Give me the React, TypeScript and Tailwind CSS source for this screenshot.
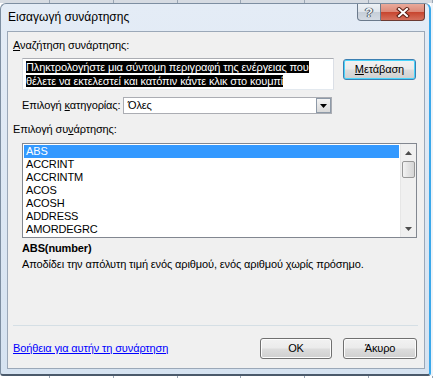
import React from 'react';

const FUNCS = ['ABS', 'ACCRINT', 'ACCRINTM', 'ACOS', 'ACOSH', 'ADDRESS', 'AMORDEGRC'];

function SheetStrip({ className = '' }: { className?: string }) {
  // the worksheet grid peeking out behind the dialog
  return (
    <div className={`flex shrink-0 ${className}`}>
      <div className="w-[50px] border-r border-[#9aa6b4]" />
      {[0, 1, 2, 3, 4, 5].map((i) => (
        <div key={i} className="w-[64px] border-r border-[#9aa6b4]" />
      ))}
    </div>
  );
}

function WinButton({
  children,
  focused = false,
  className = '',
}: {
  children: React.ReactNode;
  focused?: boolean;
  className?: string;
}) {
  return (
    <div
      className={`h-[21px] rounded-[3px] border flex items-center justify-center bg-[linear-gradient(#f2f2f2_0%,#ebebeb_48%,#dddddd_52%,#cfcfcf_100%)] ${
        focused
          ? 'border-[#3c7fb1] shadow-[inset_0_0_0_1px_#48d4fb]'
          : 'border-[#707070] shadow-[inset_0_0_0_1px_#fcfcfc]'
      } ${className}`}
    >
      {children}
    </div>
  );
}

export default function App() {
  return (
    <div className="w-[433px] h-[378px] overflow-hidden bg-white flex flex-col font-['Liberation_Sans',Arial,sans-serif] text-[11px] leading-[13px] text-black">
      <SheetStrip className="h-[3px] bg-[#d6dbe2]" />

      <div className="flex shrink-0">
        {/* Window frame */}
        <div className="w-[431px] h-[373px] flex flex-col rounded-t-[6px] rounded-b-[3px] border-l border-t border-[#7d8ea1] border-r-2 border-r-[#3aa8ea] border-b-2 border-b-[#4b5a6b] bg-[linear-gradient(#e4ecf6,#d6e3f1)]">
          {/* Title bar */}
          <div className="h-[27px] flex items-start shrink-0">
            <div className="pl-[7px] pt-[6px] text-[12px] leading-[15px] text-black">Εισαγωγή συνάρτησης</div>
            <div className="ml-auto mr-[4px] flex">
              <div className="w-[24px] h-[17px] rounded-bl-[4px] border border-t-0 border-[#6b7a8c] bg-[linear-gradient(#eef2f6_0%,#dfe5ec_48%,#c6ced8_52%,#d3dae3_100%)] flex items-center justify-center">
                <span className="text-[13px] leading-[13px] font-bold text-[#f4f6f8] [text-shadow:0_0_1px_#3d4a58,0_0_1px_#3d4a58,1px_0_0_#55606c,-1px_0_0_#55606c]">?</span>
              </div>
              <div className="w-[44px] h-[17px] rounded-br-[4px] border border-l-0 border-t-0 border-[#6b3a33] bg-[linear-gradient(#e9a99b_0%,#dd8a79_48%,#c7452f_52%,#d5705c_100%)] flex items-center justify-center">
                <svg width="14" height="11" viewBox="0 0 14 11">
                  <path d="M3 2 L11 9 M11 2 L3 9" stroke="#5a1e14" strokeWidth="4" strokeLinecap="square" />
                  <path d="M3 2 L11 9 M11 2 L3 9" stroke="#ffffff" strokeWidth="2" strokeLinecap="square" />
                </svg>
              </div>
            </div>
          </div>

          {/* Client area */}
          <div className="ml-[6px] mr-[4px] h-[338px] border border-[#9ba8b8] bg-[#f0f0f0] pl-[5px] pr-[6px] flex flex-col shrink-0 tracking-[-0.12px]">
            <div className="mt-[7px]">
              <span className="underline">Α</span>ναζήτηση συνάρτησης:
            </div>

            <div className="mt-[6px] ml-[9px] flex items-start">
              <div className="w-[312px] h-[32px] border border-[#abadb3] border-l-[#dbdfe6] border-r-[#dbdfe6] border-b-[#e3e9ef] bg-white pl-[3px] pt-[1px] leading-[14px]">
                <span className="bg-black text-white">Πληκτρολογήστε μια σύντομη περιγραφή της ενέργειας που</span>
                <br />
                <span className="bg-black text-white">θέλετε να εκτελεστεί και κατόπιν κάντε κλικ στο κουμπί</span>
              </div>
              <WinButton focused className="ml-[9px] mt-[1px] w-[73px]">
                <span>
                  <span className="underline">Μ</span>ετάβαση
                </span>
              </WinButton>
            </div>

            <div className="mt-[7px] ml-[9px] flex items-center">
              <div className="w-[101px]">
                Επιλογή <span className="underline">κ</span>ατηγορίας:
              </div>
              <div className="w-[209px] h-[17px] border border-[#abadb3] bg-white flex items-center">
                <span className="pl-[4px] flex-1">Όλες</span>
                <div className="w-[15px] h-[15px] border border-[#8e9aa8] bg-[linear-gradient(#f4f4f4,#d9d9d9)] flex items-center justify-center">
                  <svg width="7" height="4" viewBox="0 0 7 4">
                    <path d="M0 0 H7 L3.5 4 Z" fill="#000000" />
                  </svg>
                </div>
              </div>
            </div>

            <div className="mt-[9px]">
              Επιλογή συ<span className="underline">ν</span>άρτησης:
            </div>

            <div className="mt-[7px] ml-[9px] w-[395px] h-[95px] border border-[#828790] bg-white flex">
              <div className="flex-1 p-[1px]">
                {FUNCS.map((f, i) => (
                  <div
                    key={f}
                    className={`h-[13px] pl-[2px] leading-[13px] ${i === 0 ? 'bg-[#3399ff] text-white' : ''}`}
                  >
                    {f}
                  </div>
                ))}
              </div>
              {/* Scrollbar */}
              <div className="w-[16px] bg-[#f0f0f0] border-l border-[#e6e6e6] flex flex-col">
                <div className="h-[17px] flex items-center justify-center">
                  <svg width="7" height="4" viewBox="0 0 7 4">
                    <path d="M0 4 H7 L3.5 0 Z" fill="#4d4d4d" />
                  </svg>
                </div>
                <div className="h-[17px] mx-[1px] rounded-[2px] border border-[#979797] bg-[linear-gradient(90deg,#f3f3f3,#e2e2e2_50%,#d6d6d6)]" />
                <div className="flex-1" />
                <div className="h-[17px] flex items-center justify-center">
                  <svg width="7" height="4" viewBox="0 0 7 4">
                    <path d="M0 0 H7 L3.5 4 Z" fill="#4d4d4d" />
                  </svg>
                </div>
              </div>
            </div>

            <div className="mt-[4px] ml-[9px] font-bold">ABS(number)</div>
            <div className="mt-[3px] ml-[9px]">
              Αποδίδει την απόλυτη τιμή ενός αριθμού, ενός αριθμού χωρίς πρόσημο.
            </div>

            <div className="mt-[54px] h-[1px] w-[405px] bg-[#d5dfe5]" />

            <div className="mt-[12px] flex items-center">
              <span className="underline text-[#0000ff]">Βοήθεια για αυτήν τη συνάρτηση</span>
              <WinButton className="ml-auto w-[72px]">OK</WinButton>
              <WinButton className="ml-[11px] w-[74px] mr-[1px]">Άκυρο</WinButton>
            </div>
          </div>
        </div>
        <div className="flex-1 bg-[#eef3f8]" />
      </div>

      <SheetStrip className="flex-1" />
    </div>
  );
}
